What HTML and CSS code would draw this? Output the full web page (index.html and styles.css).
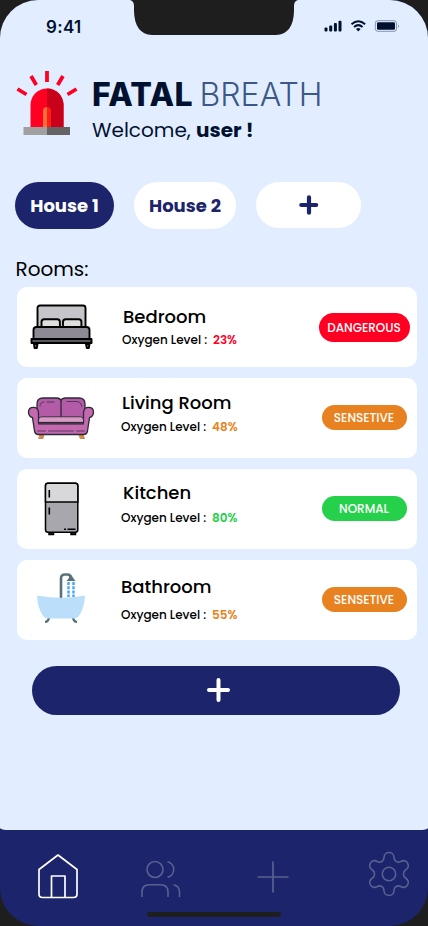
FILE: index.html
```html
<!DOCTYPE html>
<html lang="en">
<head>
<meta charset="utf-8">
<meta name="viewport" content="width=device-width, initial-scale=1">
<title>Fatal Breath</title>
<link rel="stylesheet" href="styles.css">
</head>
<body>
<div class="phone">
  <main class="screen">
    <svg class="notch" width="168" height="36" viewBox="0 0 168 36"><path d="M0 0Q4 1 4 6V11Q4.500 34 22 35H146Q163.500 34 164 11V6Q164 1 168 0Z" fill="#1e1e1e"/></svg>
    <div class="status">
      <span class="time">9:41</span>
      <svg class="signals" width="78" height="14" viewBox="0 0 78 14">
        <g fill="#00102f"><rect x="0.500" y="8.500" width="3" height="4" rx="1"/><rect x="5.200" y="6.500" width="3" height="6" rx="1"/><rect x="9.900" y="4" width="3" height="8.500" rx="1"/><rect x="14.500" y="1.800" width="3" height="10.700" rx="1"/><rect x="53" y="3.300" width="18" height="7.500" rx="1.300"/></g>
        <g fill="none" stroke="#00102f" stroke-width="2"><path d="M27.500 5.200Q34.300-.7 41.100 5.200"/><path d="M30 7.900Q34.300 4.300 38.600 7.900"/></g>
        <path d="M32 10Q34.300 8.100 36.600 10L34.300 12.500Z" fill="#00102f"/>
        <rect x="51.300" y="1.700" width="21.200" height="10.600" rx="2.500" fill="none" stroke="#00102f" stroke-opacity=".4"/>
        <path d="M74 5.500q1.800 1.500 0 3.500z" fill="#00102f" opacity=".4"/>
      </svg>
    </div>
    <header class="brand">
      <svg class="siren" width="62" height="66" viewBox="0 0 62 66">
        <g stroke="#ff0023" stroke-width="3.800"><path d="M31 1v11M15 6l5.300 9M47 6l-5.300 9M1.500 19l9 5.500M60.500 19l-9 5.500"/></g>
        <path d="M14.500 58V35a16.500 16.500 0 0 1 33 0v23z" fill="#ff0023"/><path d="M31 18.500A16.500 16.500 0 0 1 47.500 35v23H31z" fill="#c80019"/>
        <path d="M27 58V40a4 4 0 0 1 4-3v21z" fill="#ff6d38"/><path d="M31 37a4 4 0 0 1 4 4v17h-4z" fill="#ff1d18"/>
        <path d="M7.500 57H31v8H7.500z" fill="#a0a0a0"/><path d="M31 57h23v8H31z" fill="#646464"/>
      </svg>
      <div class="brand-text">
        <h1 class="title"><b class="fatal">FATAL</b><span class="breath">BREATH</span></h1>
        <p class="welcome"><span class="hello">Welcome,</span><b class="user">user !</b></p>
      </div>
    </header>
    <div class="houses">
      <button class="house house-active"><span>House 1</span></button>
      <button class="house house-second"><span>House 2</span></button>
      <button class="house house-add" aria-label="Add house"><svg width="20" height="20" viewBox="0 0 20 20"><path d="M10 2.300v15.400M2.300 10h14.900" stroke="#1c246b" stroke-width="4.200" stroke-linecap="round"/></svg></button>
    </div>
    <h2 class="rooms-title">Rooms:</h2>
    <section class="rooms">
      <article class="room">
        <div class="picture">
          <svg class="bed" width="64" height="46" viewBox="0 0 64 46" stroke="#000" stroke-width="1.900" stroke-linejoin="round">
            <rect x="7.500" y="1.500" width="48" height="24" rx="2.500" fill="#c6c5ca"/><path d="M11.500 23v-5q0-2.700 2.700-2.700h13q2.700 0 2.700 2.700v5M33 23v-5q0-2.700 2.700-2.700h13q2.700 0 2.700 2.700v5" fill="#dedede"/>
            <path d="M3.500 35V26q0-3 3-3h50q3 0 3 3v9z" fill="#8d8a95"/><path d="M1.500 35h60v4h-60z" fill="#57565c"/>
            <path d="M4 40h3.500l-.7 4H4.500zM56 40h3.500l-.7 4h-2z" fill="#a86d33"/>
          </svg>
        </div>
        <div class="info info-bedroom"><h3 class="name">Bedroom</h3><p class="level"><span class="label">Oxygen Level :</span><b class="value red">23%</b></p></div>
        <span class="badge badge-danger">DANGEROUS</span>
      </article>
      <article class="room">
        <div class="picture">
          <svg width="68" height="44" viewBox="0 0 68 44" stroke="#292a36" stroke-width="1.300" stroke-linejoin="round" stroke-linecap="round">
            <path d="M13 38.500h4l-1 4h-4zM52 38.500h4l1.500 4h-4z" fill="#e38935" stroke="#9a653c" stroke-width=".6"/>
            <path d="M10 26V8q0-6 6-6h13q5 0 5 3.500V26zM34 26V5.500Q34 2 39 2h13q6 0 6 6v18z" fill="#b45ba8"/>
            <path d="M1.500 16q0-4.700 5-4.700 4.500 0 5 5V27h45V16.300q.5-5 5-5 5 0 5 4.700 0 4.500-4 5.700L60.500 35q-.7 3.500-4 3.500H11.500q-3.300 0-4-3.500L5.500 21.700q-4-1.200-4-5.700z" fill="#c468af"/>
            <path d="M11.500 26v-2q0-3.200 3-3.200h39q3 0 3 3.200v2z" fill="#d89ac5" stroke-width=".9"/><path d="M11.500 24v4.300h45V24M10.500 35h8m3 0h25m3 0h8M13 10q0-4 4-4m3 0h7M40 5.500h9q5 0 6 5" fill="none" stroke-width=".7"/>
          </svg>
        </div>
        <div class="info info-living"><h3 class="name">Living Room</h3><p class="level"><span class="label">Oxygen Level :</span><b class="value orange">48%</b></p></div>
        <span class="badge">SENSETIVE</span>
      </article>
      <article class="room">
        <div class="picture">
          <svg class="fridge" width="36" height="54" viewBox="0 0 36 54" stroke="#000" stroke-width="1.500">
            <path d="M5 50h4.500v2.500H5zM27 50h4.500v2.500H27z" fill="#222"/><rect x="1.500" y="1.200" width="32.300" height="49" rx="2.500" fill="#a9a7ae"/>
            <path d="M1.500 20V3.700q0-2.500 2.500-2.500h27.300q2.500 0 2.500 2.500V20z" fill="#d8d8da"/><path d="M5.300 8v7.500M5.300 25.500v7M20 47.200h2M23.500 47.200h8" stroke-width="1.600"/>
          </svg>
        </div>
        <div class="info info-kitchen"><h3 class="name">Kitchen</h3><p class="level"><span class="label">Oxygen Level :</span><b class="value green">80%</b></p></div>
        <span class="badge badge-normal">NORMAL</span>
      </article>
      <article class="room">
        <div class="picture">
          <svg class="bath" width="50" height="52" viewBox="0 0 50 52">
            <path d="M25 27V6.500q0-4 4-4h2q4 0 4 4V8" fill="none" stroke="#59717c" stroke-width="2.600"/><path d="M33 3q3.500 0 3.500 2L39.500 9H30.500l2.500-3z" fill="#59717c"/>
            <path d="M32.500 10v15M37.500 10v15" stroke="#42a5f5" stroke-width="2.400" stroke-dasharray="3 1.200"/>
            <path d="M13 45.500q-.5 4-4 4.500M37 45.500q.5 4 4 4.500" stroke="#546e7a" stroke-width="2.200" fill="none"/>
            <path d="M1 23.500q24 4.500 48 0-.5 12-5.500 19.500Q41.500 46.500 37 46.500H13q-4.500 0-6.500-3.500Q1.500 35.500 1 23.500z" fill="#bbdefb"/>
          </svg>
        </div>
        <div class="info info-bath"><h3 class="name">Bathroom</h3><p class="level"><span class="label">Oxygen Level :</span><b class="value orange">55%</b></p></div>
        <span class="badge">SENSETIVE</span>
      </article>
    </section>
    <button class="add-room" aria-label="Add room"><svg width="26" height="26" viewBox="0 0 26 26"><path d="M13.500 3v20M4 13h19" stroke="#fff" stroke-width="4" stroke-linecap="round"/></svg></button>
  </main>
  <nav class="nav">
    <svg width="42" height="46" viewBox="0 0 42 46" fill="none" stroke="#fff" stroke-width="1.700" stroke-linejoin="round"><path d="M2 16.500 21 2l19 14.500V41q0 3.500-3.500 3.500h-31Q2 44.500 2 41zM14.500 44.500V23H28v21.500"/></svg>
    <svg class="people" width="42" height="40" viewBox="0 0 42 40" fill="none" stroke="#5a6091" stroke-width="1.600"><circle cx="15" cy="10.500" r="8"/><path d="M27.500 2.700a8 8 0 0 1 0 15.600M2 38v-5q0-7.300 7.300-7.300h11.400Q28 25.700 28 33v5M33.500 25.700q6 1.500 6 7.300v5"/></svg>
    <svg class="plus" width="34" height="34" viewBox="0 0 34 34" stroke="#5a6091" stroke-width="1.700"><path d="M17 1.500v31M1.500 17h31"/></svg>
    <svg class="gear" width="42" height="46" viewBox="0 0 42 46" fill="none" stroke="#5a6091" stroke-width="1.600"><circle cx="21" cy="23" r="6.700"/><path d="M16 6.500C16 -.2 26 -.2 26 6.500C26 10 29.500 12.200 32.800 10.500C38.500 7 43.500 15.500 37.800 18.800C34.700 20.500 34.700 25.500 37.800 27.200C43.500 30.500 38.500 39 32.800 35.500C29.500 33.800 26 36 26 39.500C26 46.200 16 46.200 16 39.500C16 36 12.500 33.800 9.200 35.500C3.500 39 -1.500 30.500 4.200 27.200C7.300 25.500 7.300 20.500 4.200 18.800C-1.500 15.500 3.500 7 9.200 10.500C12.500 12.200 16 10 16 6.500Z"/></svg>
    <i class="home-bar"></i>
  </nav>
</div>
</body>
</html>
```
FILE: styles.css
```css
* { box-sizing: border-box; }
body { margin: 0; background: #1e1e1e; font-family: Poppins, Inter, sans-serif; color: #000; }
h1, h2, h3, p { margin: 0; font-weight: 400; }
button { border: 0; padding: 0; font: inherit; }
svg { display: block; flex: none; }
.phone { width: 428px; height: 926px; overflow: hidden; border-radius: 38px; background: #1c246b; }
.screen { position: relative; height: 830px; background: #e2eeff; border-radius: 0 0 9px 9px / 0 0 2px 2px; }
.notch { position: absolute; left: 130px; top: 0; }
.status { height: 70px; padding: 17px 26px 0 46px; display: flex; justify-content: space-between; }
.time { font: 600 17px/20px Inter, sans-serif; letter-spacing: .3px; color: #00102f; }
.signals { margin-top: 2px; }
.brand { display: flex; padding-left: 16px; height: 112px; }
.brand-text { margin-left: 14px; padding-top: 5px; color: #00102f; white-space: nowrap; }
.title { display: flex; font: 300 32px/40px Inter, sans-serif; }
.fatal { width: 107.5px; font-weight: 800; letter-spacing: .4px; }
.breath { color: #3c5887; }
.welcome { display: flex; font-size: 20px; line-height: 30px; }
.hello { width: 104px; }
.user { font-weight: 700; }
.houses { display: flex; gap: 20px; padding-left: 15px; height: 47px; }
.house { display: flex; align-items: center; justify-content: center; border-radius: 24px; background: #fff; color: #1c246b; font-size: 18px; font-weight: 700; white-space: nowrap; }
.house-active { width: 99px; background: #1c246b; color: #fff; }
.house-second { width: 102px; }
.house-add { width: 105px; height: 46px; }
.rooms-title { padding-left: 15.5px; margin-top: 25px; height: 33px; font-size: 20px; line-height: 30px; }
.rooms { display: grid; gap: 11px; padding: 0 11px 0 17px; }
.room { display: flex; height: 80px; border-radius: 10px; background: #fff; }
.picture { width: 88px; display: flex; align-items: center; justify-content: center; }
.bed { margin-left: 1px; }
.fridge { margin-left: 1px; }
.bath { margin-top: -4px; }
.info { flex: 1; padding-left: 16px; white-space: nowrap; }
.name { height: 24px; padding-left: 1px; font-size: 18px; line-height: 24px; font-weight: 500; }
.level { display: flex; margin-top: 3px; font-size: 12px; line-height: 18px; font-weight: 500; }
.label { width: 91px; }
.value { font-weight: 600; }
.info-bedroom { padding-top: 18px; }
.info-bedroom .level { margin-top: 2px; padding-left: 1px; }
.info-bedroom .name, .info-kitchen .name { padding-left: 2px; }
.info-living { padding-top: 13px; }
.info-kitchen { padding-top: 12px; }
.info-kitchen .level { margin-top: 4px; }
.info-bath { padding-top: 15px; }
.info-bath .name { padding-left: 0; }
.info-bath .level { margin-top: 7px; }
.red { color: #ff0023; }
.orange { color: #e88220; }
.green { color: #25d04a; }
.badge { width: 85px; height: 25px; margin: 27px 10px 0 0; padding-right: 1px; border-radius: 13px; background: #e88220; color: #fff; font-size: 12px; line-height: 25px; font-weight: 500; text-align: center; }
.badge-danger { width: 91px; height: 29px; line-height: 29px; border-radius: 15px; background: #ff0023; margin: 26px 7px 0 0; }
.badge-normal { background: #25d04a; }
.add-room { display: flex; align-items: center; justify-content: center; width: 368px; height: 49px; margin: 26px 0 0 32px; padding: 0 0 2px 4px; border-radius: 25px; background: #1c246b; }
.nav { position: relative; display: flex; height: 96px; padding: 23px 18px 0 37px; }
.people { margin: 6px 0 0 60.5px; }
.plus { margin: 7px 0 0 74.5px; }
.gear { margin: -2px 0 0 78px; }
.home-bar { position: absolute; left: 147px; top: 82px; width: 134px; height: 5px; border-radius: 3px; background: #1e1e1e; }
```
